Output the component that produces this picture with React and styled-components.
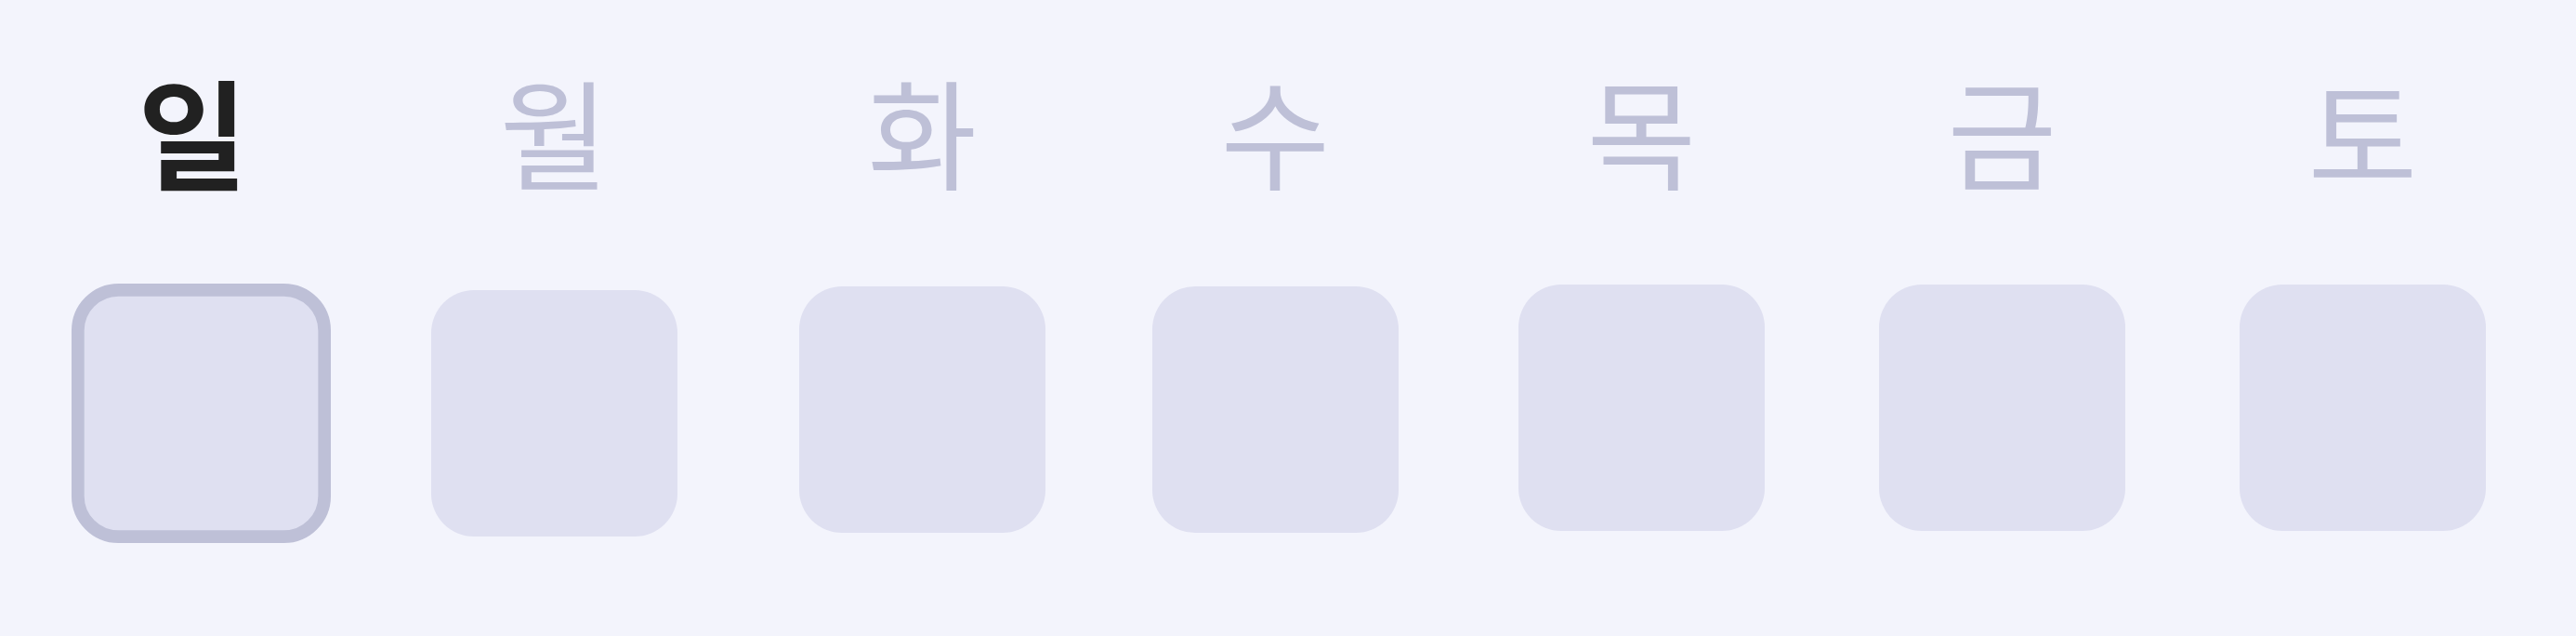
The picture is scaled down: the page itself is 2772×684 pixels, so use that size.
import React from "react";
import styled, { createGlobalStyle } from "styled-components";

const Global = createGlobalStyle`
  html, body {
    margin: 0;
    padding: 0;
    background: #f3f4fc;
  }
  body {
    font-family: "Noto Sans CJK KR", "Noto Sans", sans-serif;
  }
`;

const Week = styled.div`
  display: flex;
  align-items: flex-start;
  gap: 123px;
  padding: 64px 0 0 82px;
  height: 684px;
  box-sizing: border-box;
  background: #f3f4fc;
`;

const Day = styled.div`
  display: flex;
  flex-direction: column;
  align-items: center;
  width: 265px;
  flex: 0 0 265px;
  transform: translateX(${(p) => p.$nudge}px);
`;

const Label = styled.span`
  font-family: "Noto Sans CJK KR", "Noto Sans", sans-serif;
  font-size: 128px;
  line-height: 1;
  height: 152px;
  display: flex;
  align-items: center;
  font-weight: ${(p) => (p.$active ? 700 : 400)};
  color: ${(p) => (p.$active ? "#212121" : "#bec0d7")};
  transform: translateX(${(p) => (p.$active ? -9 : 0)}px);
`;

const Cell = styled.div`
  box-sizing: border-box;
  width: 265px;
  height: 265px;
  margin-top: 90px;
  border-radius: ${(p) => (p.$active ? "48px" : "46px")};
  background: #dfe0f1;
  border: ${(p) => (p.$active ? "13.5px solid #bec0d7" : "none")};
  transform: translateY(${(p) => p.$drop}px) scale(${(p) => (p.$active ? 1.053 : 1)});
`;

const days = [
  { label: "일", drop: 6, nudge: 2, active: true },
  { label: "월", drop: 6, nudge: -6 },
  { label: "화", drop: 2, nudge: 2 },
  { label: "수", drop: 2, nudge: -6 },
  { label: "목", drop: 0, nudge: 0 },
  { label: "금", drop: 0, nudge: 0 },
  { label: "토", drop: 0, nudge: 0 },
];

export default function App() {
  return (
    <>
      <Global />
      <Week>
        {days.map((d) => (
          <Day key={d.label} $nudge={d.nudge}>
            <Label $active={d.active}>{d.label}</Label>
            <Cell $active={d.active} $drop={d.drop} />
          </Day>
        ))}
      </Week>
    </>
  );
}
